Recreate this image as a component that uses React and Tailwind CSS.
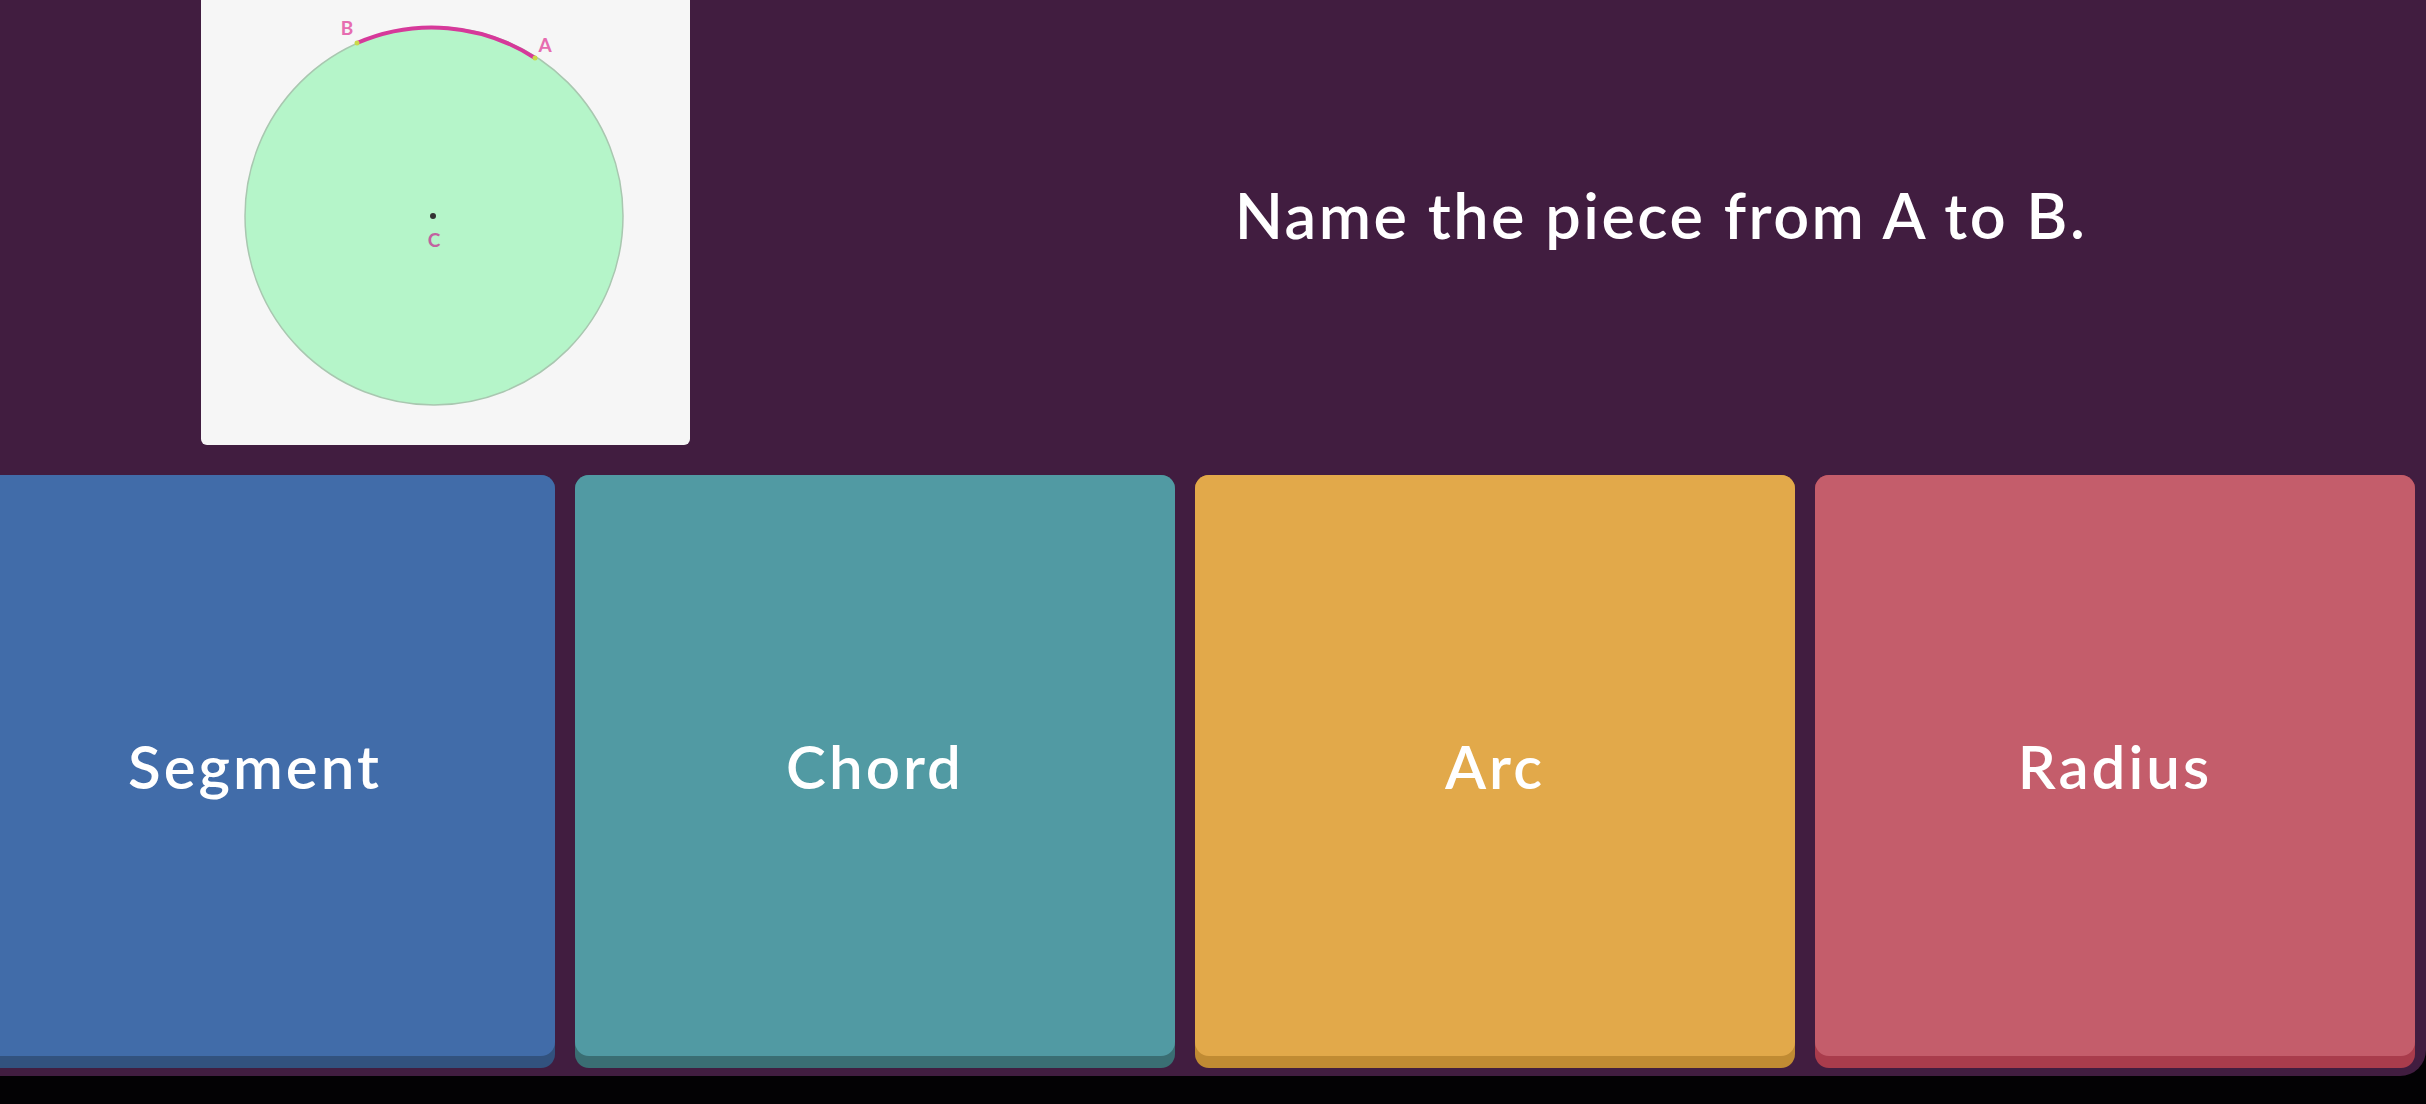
import React from "react";

const OPTIONS = [
  { label: "Segment", face: "bg-[#416ca9]", lip: "bg-[#32527e]" },
  { label: "Chord", face: "bg-[#519aa3]", lip: "bg-[#3a6e73]" },
  { label: "Arc", face: "bg-[#e2a94a]", lip: "bg-[#c08b33]" },
  { label: "Radius", face: "bg-[#c45d6b]", lip: "bg-[#a93c4c]" },
];

// circle diagram: center, radius, arc from B to A
function CircleDiagram() {
  return (
    <svg width="489" height="445" viewBox="0 0 489 445">
      <circle cx="233" cy="216" r="189" fill="#b5f5c9" stroke="#a9c7b0" strokeWidth="1.5" />
      <path d="M156 43 A189 189 0 0 1 334 58" fill="none" stroke="#d6399a" strokeWidth="4" strokeLinecap="round" />
      <circle cx="156" cy="43" r="2.5" fill="#c9d94a" />
      <circle cx="334" cy="58" r="2.5" fill="#c9d94a" />
      <circle cx="232" cy="216" r="3" fill="#333" />
      <text x="146" y="35" fontSize="19" fontWeight="700" fill="#e66cb0" fontFamily="Lato, sans-serif" textAnchor="middle">B</text>
      <text x="344" y="52" fontSize="19" fontWeight="700" fill="#e66cb0" fontFamily="Lato, sans-serif" textAnchor="middle">A</text>
      <text x="233" y="247" fontSize="19" fontWeight="700" fill="#c262a0" fontFamily="Lato, sans-serif" textAnchor="middle">C</text>
    </svg>
  );
}

export default function App() {
  return (
    <div className="w-full h-screen bg-[#030204] overflow-hidden font-['Lato',sans-serif]">
      <div className="h-[1076px] bg-[#411d40] rounded-br-[26px] flex flex-col">
        {/* Question */}
        <div className="flex h-[475px] shrink-0">
          <div className="ml-[201px] w-[489px] h-[445px] bg-[#f6f6f6] rounded-b-md overflow-hidden">
            <CircleDiagram />
          </div>
          <div className="flex-1 flex items-center justify-center pl-[206px] pb-[47px]">
            <p className="text-white text-[63px] font-semibold leading-none tracking-[2.5px]">Name the piece from A to B.</p>
          </div>
        </div>

        {/* Options */}
        <div className="flex justify-end gap-5 pr-[11px]">
          {OPTIONS.map((opt) => (
            <div key={opt.label} className={`w-[600px] h-[593px] shrink-0 rounded-[14px] ${opt.lip}`}>
              <div className={`h-[581px] rounded-[14px] ${opt.face} flex items-center justify-center`}>
                <span className="text-white text-[60px] font-semibold tracking-[3px]">{opt.label}</span>
              </div>
            </div>
          ))}
        </div>
      </div>
    </div>
  );
}
